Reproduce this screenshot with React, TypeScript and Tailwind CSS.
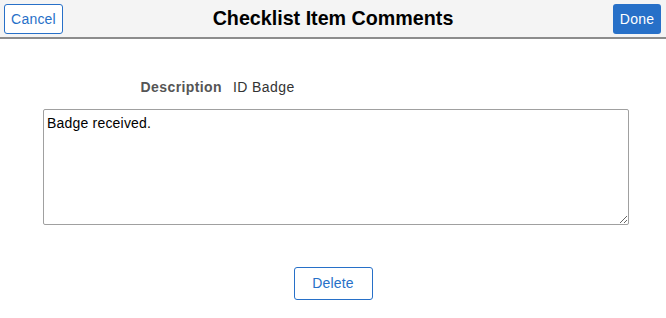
import React from "react";

export default function App() {
  return (
    <div className="w-[666px] h-[318px] bg-white" style={{ fontFamily: '"Liberation Sans", Arial, sans-serif' }}>
      <div className="h-[39px] bg-[#f4f4f4] border-b-2 border-[#8c8c8c] flex items-start justify-between pl-[4px] pr-[5px] pt-[4px] relative">
        <button className="h-[30px] w-[59px] border border-[#2770c8] rounded-[3px] bg-white text-[#2770c8] text-[14px] tracking-[0.2px]">
          Cancel
        </button>
        <div className="absolute left-0 right-0 top-0 h-[37px] flex items-center justify-center pointer-events-none">
          <span className="text-[19.7px] font-bold text-black">Checklist Item Comments</span>
        </div>
        <button className="h-[30px] w-[48px] rounded-[3px] bg-[#2770c8] text-white text-[14px] tracking-[0.2px]">
          Done
        </button>
      </div>
      <div className="pt-[38px] px-[43px]">
        <div className="flex items-center h-[20px] text-[14px] tracking-[0.4px]">
          <div className="w-[179px] text-right font-bold text-[#555555]">Description</div>
          <div className="ml-[11px] text-[#333333]">ID Badge</div>
        </div>
        <textarea
          className="mt-[12px] block w-[586px] h-[116px] border border-[#a0a0a0] rounded-[2px] px-[3px] pt-[3px] pb-[4px] text-[14px] tracking-[0.2px] text-black resize-y outline-none"
          style={{ fontFamily: '"Liberation Sans", Arial, sans-serif' }}
          defaultValue="Badge received."
        />
        <div className="flex justify-center mt-[42px]">
          <button className="h-[33px] w-[79px] border border-[#2770c8] rounded-[3px] bg-white text-[#2770c8] text-[14px] tracking-[0.2px]">
            Delete
          </button>
        </div>
      </div>
    </div>
  );
}
